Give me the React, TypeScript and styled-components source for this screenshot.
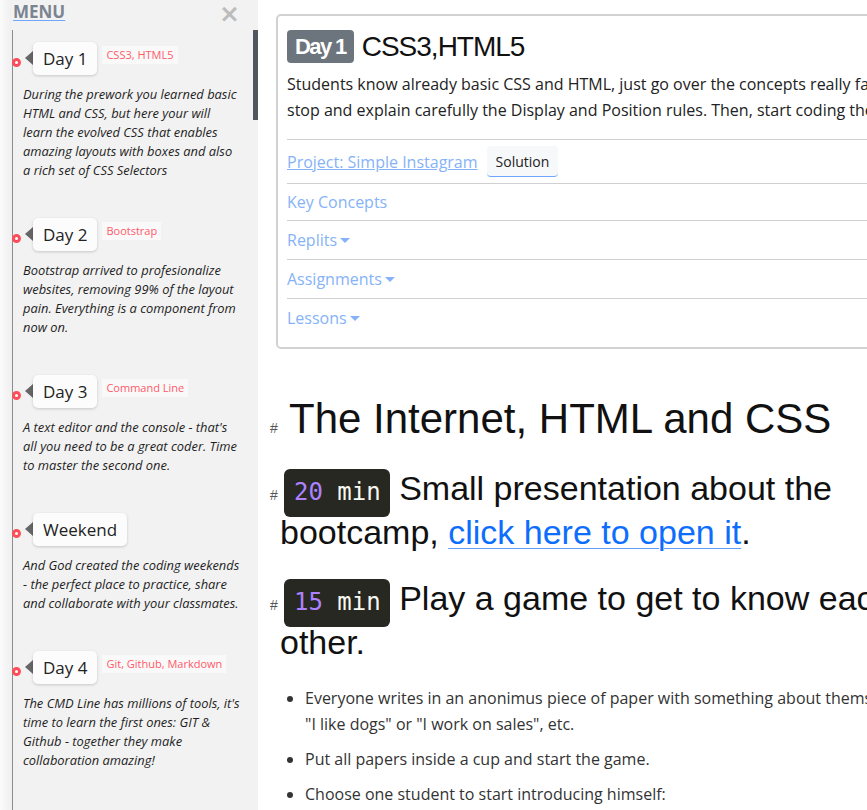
import React from "react";
import styled, { createGlobalStyle } from "styled-components";

const GlobalStyle = createGlobalStyle`
  html, body {
    margin: 0;
    padding: 0;
    overflow: hidden;
    background: #fff;
  }
  body {
    font-family: "Open Sans", "Noto Sans", sans-serif;
    color: #222;
  }
`;

const days = [
  {
    label: "Day 1",
    tag: "CSS3, HTML5",
    text: "During the prework you learned basic HTML and CSS, but here your will learn the evolved CSS that enables amazing layouts with boxes and also a rich set of CSS Selectors",
  },
  {
    label: "Day 2",
    tag: "Bootstrap",
    text: "Bootstrap arrived to profesionalize websites, removing 99% of the layout pain. Everything is a component from now on.",
  },
  {
    label: "Day 3",
    tag: "Command Line",
    text: "A text editor and the console - that's all you need to be a great coder. Time to master the second one.",
  },
  {
    label: "Weekend",
    tag: "",
    text: "And God created the coding weekends - the perfect place to practice, share and collaborate with your classmates.",
  },
  {
    label: "Day 4",
    tag: "Git, Github, Markdown",
    text: "The CMD Line has millions of tools, it's time to learn the first ones: GIT & Github - together they make collaboration amazing!",
  },
];

const App = () => {
  return (
    <>
      <GlobalStyle />
      <Page>
        <Sidebar>
          <MenuHeader>
            <MenuTitle href="#">MENU</MenuTitle>
            <Close>&times;</Close>
          </MenuHeader>
          <Timeline>
            {days.map((d) => (
              <Item key={d.label}>
                <DayRow>
                  <Dot />
                  <Arrow />
                  <DayBox>{d.label}</DayBox>
                  {d.tag && <Tag>{d.tag}</Tag>}
                </DayRow>
                <Description>{d.text}</Description>
              </Item>
            ))}
          </Timeline>
          <ScrollThumb />
        </Sidebar>

        <Main>
          <DayCard>
            <CardTitle>
              <DayBadge>Day 1</DayBadge>
              <span>CSS3,HTML5</span>
            </CardTitle>
            <CardText>
              Students know already basic CSS and HTML, just go over the
              concepts really fast and stop and explain carefully the Display
              and Position rules. Then, start coding the page.
            </CardText>
            <CardRow pad={6}>
              <ProjectLink href="#">Project: Simple Instagram</ProjectLink>
              <SolutionButton>Solution</SolutionButton>
            </CardRow>
            <CardRow pad={6}>
              <RowLink href="#">Key Concepts</RowLink>
            </CardRow>
            <CardRow pad={7}>
              <RowLink href="#">
                Replits<Caret />
              </RowLink>
            </CardRow>
            <CardRow pad={7}>
              <RowLink href="#">
                Assignments<Caret />
              </RowLink>
            </CardRow>
            <CardRow pad={7}>
              <RowLink href="#">
                Lessons<Caret />
              </RowLink>
            </CardRow>
          </DayCard>

          <Markdown>
            <H1>
              <Anchor>#</Anchor>The Internet, HTML and CSS
            </H1>
            <H2>
              <Anchor>#</Anchor>
              <Timer>
                <TimerNum>20</TimerNum> min
              </Timer>{" "}
              Small presentation about the bootcamp,{" "}
              <BlueLink href="#">click here to open it</BlueLink>.
            </H2>
            <H2>
              <Anchor>#</Anchor>
              <Timer>
                <TimerNum>15</TimerNum> min
              </Timer>{" "}
              Play a game to get to know each other.
            </H2>
            <List>
              <li>
                Everyone writes in an anonimus piece of paper with something
                about themselves, {"\"I\u00a0like\u00a0dogs\""} or "I work on
                sales", etc.
              </li>
              <li>Put all papers inside a cup and start the game.</li>
              <li>Choose one student to start introducing himself:</li>
            </List>
          </Markdown>
        </Main>
      </Page>
    </>
  );
};

const Page = styled.div`
  display: flex;
  height: 100vh;
  overflow: hidden;
`;

const Sidebar = styled.aside`
  position: relative;
  flex: 0 0 258px;
  height: 100%;
  overflow: hidden;
  background: linear-gradient(to right, #fbfbfb 0, #f0f0f0 11px, #f2f2f2 12px);
`;

const MenuHeader = styled.div`
  display: flex;
  justify-content: space-between;
  align-items: flex-start;
  padding: 0 18px 0 13px;
  height: 30px;
`;

const MenuTitle = styled.a`
  font-weight: 700;
  font-size: 17px;
  line-height: 24px;
  color: #7b8491;
  text-decoration: underline;
  text-decoration-color: #6ea8fe;
  text-underline-offset: 2px;
`;

const Close = styled.span`
  font-family: "DejaVu Sans", sans-serif;
  font-weight: 700;
  font-size: 25px;
  line-height: 28px;
  color: #bcbcbc;
`;

const Timeline = styled.div`
  margin-left: 12px;
  border-left: 1px solid #8c8c8c;
  padding-top: 12px;
  min-height: 100%;
`;

const Item = styled.div`
  margin-bottom: 38px;
`;

const DayRow = styled.div`
  display: flex;
  align-items: flex-start;
  height: 33px;
`;

const Dot = styled.span`
  box-sizing: border-box;
  width: 9px;
  height: 9px;
  margin: 16px 0 0 -1px;
  border-radius: 50%;
  border: 3px solid #ff4d5a;
  background: #fff;
`;

const Arrow = styled.span`
  width: 0;
  height: 0;
  margin: 9px 0 0 4px;
  border-top: 7px solid transparent;
  border-bottom: 7px solid transparent;
  border-right: 8px solid #666;
`;

const DayBox = styled.div`
  box-sizing: border-box;
  height: 33px;
  padding: 0 10px;
  display: flex;
  align-items: center;
  background: #fcfcfc;
  border-radius: 5px;
  box-shadow: 0 1px 3px rgba(0, 0, 0, 0.18);
  font-size: 17px;
  color: #222;
`;

const Tag = styled.span`
  margin: 4px 0 0 5px;
  padding: 2px 4px;
  background: #f9f9f9;
  color: #ff5a6a;
  font-size: 11px;
  line-height: 14px;
`;

const Description = styled.p`
  margin: 10px 0 0;
  padding-left: 10px;
  width: 218px;
  font-size: 12.9px;
  font-style: italic;
  line-height: 19px;
  color: #1f1f1f;
`;

const ScrollThumb = styled.div`
  position: absolute;
  top: 30px;
  right: 0;
  width: 5px;
  height: 90px;
  background: #50555f;
`;

const Main = styled.main`
  flex: 0 0 auto;
  width: 700px;
  box-sizing: border-box;
  padding: 14px 0 0 18px;
`;

const DayCard = styled.section`
  box-sizing: border-box;
  width: 672px;
  border: 2px solid #d2d2d2;
  border-radius: 5px;
  padding: 14px 9px 10px;
`;

const CardTitle = styled.h3`
  margin: 0;
  display: flex;
  align-items: center;
  gap: 8px;
  height: 33px;
  font-family: "Liberation Sans", Arial, sans-serif;
  font-weight: 400;
  font-size: 28px;
  letter-spacing: -1px;
  color: #111;
`;

const DayBadge = styled.span`
  display: inline-flex;
  align-items: center;
  height: 33px;
  padding: 0 8px;
  border-radius: 4px;
  background: #6c757d;
  color: #fff;
  font-weight: 700;
  font-size: 22px;
  letter-spacing: -1.6px;
`;

const CardText = styled.p`
  margin: 8px 0 16px;
  font-size: 16px;
  line-height: 26px;
  color: #222;
`;

const CardRow = styled.div<{ pad: number }>`
  display: flex;
  align-items: center;
  border-top: 1px solid #d0d0d0;
  padding: ${(p) => p.pad}px 0;
  line-height: 24px;
  font-size: 16px;
`;

const ProjectLink = styled.a`
  color: #86b3f7;
  text-decoration: underline;
`;

const RowLink = styled.a`
  color: #86b3f7;
  text-decoration: none;
  display: inline-flex;
  align-items: center;
  height: 24px;
`;

const Caret = styled.span`
  display: inline-block;
  margin-left: 3px;
  margin-top: 1px;
  width: 0;
  height: 0;
  border-left: 5px solid transparent;
  border-right: 5px solid transparent;
  border-top: 5px solid #86b3f7;
`;

const SolutionButton = styled.button`
  margin-left: 9px;
  height: 31px;
  padding: 0 9px;
  background: #f6f8fa;
  border: none;
  border-bottom: 1px solid #6ea8fe;
  border-radius: 4px;
  font-family: "Open Sans", "Noto Sans", sans-serif;
  font-size: 14px;
  color: #222;
`;

const Markdown = styled.article`
  width: 668px;
  padding-left: 4px;
  font-family: "Liberation Sans", Arial, sans-serif;
  color: #111;
`;

const Anchor = styled.a`
  display: inline-block;
  width: 10px;
  margin-left: -10px;
  font-family: "Liberation Sans", Arial, sans-serif;
  font-size: 14px;
  line-height: 14px;
  color: #555;
`;

const H1 = styled.h1`
  margin: 45px 0 0;
  font-size: 42px;
  font-weight: 400;
  line-height: 50px;
  ${Anchor} {
    width: 19px;
  }
`;

const H2 = styled.h2`
  margin: 23px 0 0;
  font-size: 34px;
  font-weight: 400;
  line-height: 43px;
`;

const Timer = styled.code`
  display: inline-block;
  margin: 0 0 -6px 4px;
  padding: 9px 9px 11px 10px;
  border-radius: 6px;
  background: #272822;
  color: #f8f8f2;
  font-family: "DejaVu Sans Mono", "Liberation Mono", monospace;
  font-size: 24px;
  line-height: 28px;
`;

const TimerNum = styled.span`
  color: #ae81ff;
`;

const BlueLink = styled.a`
  color: #0d6efd;
  text-decoration: underline;
  text-decoration-color: #5f9cf5;
  text-decoration-thickness: 1px;
  text-underline-offset: 4px;
`;

const List = styled.ul`
  margin: 21px 0 0;
  padding-left: 25px;
  font-family: "Open Sans", "Noto Sans", sans-serif;
  font-size: 16px;
  line-height: 26px;
  color: #333;
  li {
    margin-bottom: 9px;
  }
`;

export default App;
